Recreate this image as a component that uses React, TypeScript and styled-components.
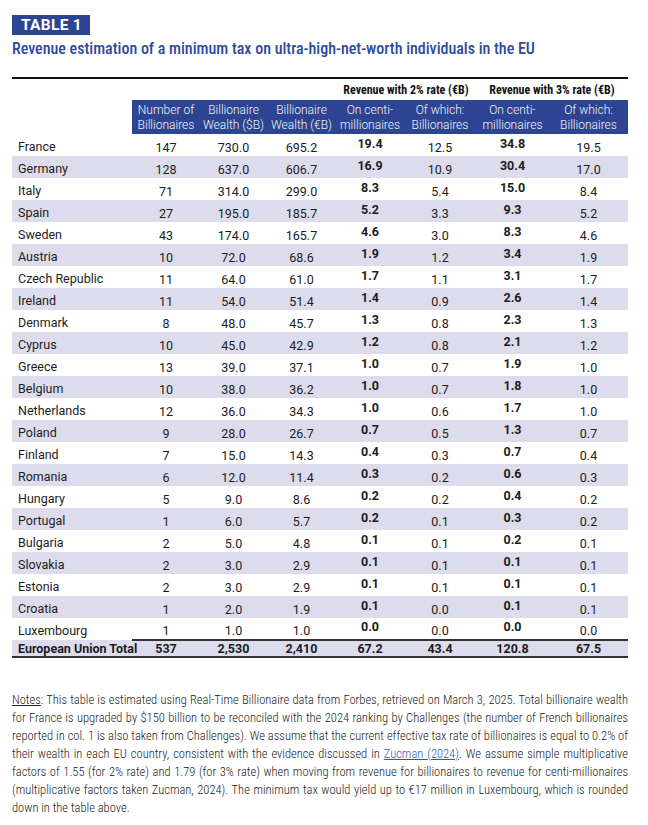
import styled, { createGlobalStyle } from "styled-components";

const GlobalStyle = createGlobalStyle`
    body {
        margin: 0;
        background: #ffffff;
        font-family: Roboto, "Noto Sans", sans-serif;
        color: #1c1c1c;
    }
`;

const Page = styled.div`
    width: 648px;
    padding: 15px 20px 0 12px;
    box-sizing: border-box;
`;

const Badge = styled.div`
    display: inline-block;
    background: #2d4492;
    color: #fff;
    font-weight: 700;
    font-size: 15.5px;
    font-stretch: 88%;
    line-height: 20px;
    height: 20px;
    padding: 0 8px 0 9px;
    letter-spacing: 0.3px;
`;

const Title = styled.h1`
    margin: 4px 0 0;
    color: #2d4a9c;
    font-size: 16px;
    font-weight: 500;
    font-stretch: 85%;
    line-height: 20px;
`;

const Table = styled.table`
    margin-top: 18px;
    width: 616px;
    border-collapse: collapse;
    table-layout: fixed;
    border-top: 2px solid #111;
    font-size: 12.5px;
`;

const GroupHead = styled.th`
    font-weight: 700;
    font-size: 12px;
    font-stretch: 84%;
    color: #111;
    height: 21px;
    padding: 0;
    vertical-align: middle;
    text-align: center;
    white-space: nowrap;
`;

const BandHead = styled.th`
    background: #2d4492;
    color: #f2f3fa;
    font-weight: 300;
    font-size: 12px;
    line-height: 15px;
    height: 33px;
    padding: 1px 0 0;
    text-align: center;
    white-space: nowrap;
`;

const Row = styled.tr<{ $shade: boolean }>`
    height: 22px;
    background: ${(p) => (p.$shade ? "#dcdcec" : "transparent")};
`;

const Country = styled.td`
    padding: 3px 0 0 6px;
    text-align: left;
    white-space: nowrap;
`;

const Num = styled.td<{ $bold?: boolean }>`
    text-align: center;
    padding: ${(p) => (p.$bold ? "0 0 4px" : "4px 0 0")};
    font-weight: ${(p) => (p.$bold ? 700 : 400)};
`;

const TotalRow = styled.tr`
    height: 17px;
    background: #dcdcec;
    font-weight: 700;
    border-bottom: 2px solid #333;
`;

const TotalLabel = styled.td`
    padding: 0 0 0 6px;
    white-space: nowrap;
`;

const TotalNum = styled.td`
    text-align: center;
    padding: 0;
    border-top: 2px solid #333;
`;

const Notes = styled.p`
    margin: 33px 0 0;
    width: 616px;
    font-size: 12.5px;
    font-weight: 300;
    font-stretch: 78%;
    line-height: 18px;
    color: #222;
    text-align: justify;
`;

const U = styled.span`
    text-decoration: underline;
`;

const Link = styled.span`
    color: #2d5aa8;
    text-decoration: underline;
`;

type R = [string, string, string, string, string, string, string, string];

const rows: R[] = [
    ["France", "147", "730.0", "695.2", "19.4", "12.5", "34.8", "19.5"],
    ["Germany", "128", "637.0", "606.7", "16.9", "10.9", "30.4", "17.0"],
    ["Italy", "71", "314.0", "299.0", "8.3", "5.4", "15.0", "8.4"],
    ["Spain", "27", "195.0", "185.7", "5.2", "3.3", "9.3", "5.2"],
    ["Sweden", "43", "174.0", "165.7", "4.6", "3.0", "8.3", "4.6"],
    ["Austria", "10", "72.0", "68.6", "1.9", "1.2", "3.4", "1.9"],
    ["Czech Republic", "11", "64.0", "61.0", "1.7", "1.1", "3.1", "1.7"],
    ["Ireland", "11", "54.0", "51.4", "1.4", "0.9", "2.6", "1.4"],
    ["Denmark", "8", "48.0", "45.7", "1.3", "0.8", "2.3", "1.3"],
    ["Cyprus", "10", "45.0", "42.9", "1.2", "0.8", "2.1", "1.2"],
    ["Greece", "13", "39.0", "37.1", "1.0", "0.7", "1.9", "1.0"],
    ["Belgium", "10", "38.0", "36.2", "1.0", "0.7", "1.8", "1.0"],
    ["Netherlands", "12", "36.0", "34.3", "1.0", "0.6", "1.7", "1.0"],
    ["Poland", "9", "28.0", "26.7", "0.7", "0.5", "1.3", "0.7"],
    ["Finland", "7", "15.0", "14.3", "0.4", "0.3", "0.7", "0.4"],
    ["Romania", "6", "12.0", "11.4", "0.3", "0.2", "0.6", "0.3"],
    ["Hungary", "5", "9.0", "8.6", "0.2", "0.2", "0.4", "0.2"],
    ["Portugal", "1", "6.0", "5.7", "0.2", "0.1", "0.3", "0.2"],
    ["Bulgaria", "2", "5.0", "4.8", "0.1", "0.1", "0.2", "0.1"],
    ["Slovakia", "2", "3.0", "2.9", "0.1", "0.1", "0.1", "0.1"],
    ["Estonia", "2", "3.0", "2.9", "0.1", "0.1", "0.1", "0.1"],
    ["Croatia", "1", "2.0", "1.9", "0.1", "0.0", "0.1", "0.1"],
    ["Luxembourg", "1", "1.0", "1.0", "0.0", "0.0", "0.0", "0.0"],
];

const widths = [120, 68, 67, 69, 68, 72, 73, 79];

export default function App() {
    return (
        <Page>
            <GlobalStyle />
            <Badge>TABLE 1</Badge>
            <Title>Revenue estimation of a minimum tax on ultra-high-net-worth individuals in the EU</Title>
            <Table>
                <colgroup>
                    {widths.map((w, i) => (
                        <col key={i} style={{ width: w }} />
                    ))}
                </colgroup>
                <thead>
                    <tr>
                        <th colSpan={4} />
                        <GroupHead colSpan={2}>Revenue with 2% rate (€B)</GroupHead>
                        <GroupHead colSpan={2}>Revenue with 3% rate (€B)</GroupHead>
                    </tr>
                    <tr>
                        <th />
                        <BandHead>Number of<br />Billionaires</BandHead>
                        <BandHead>Billionaire<br />Wealth ($B)</BandHead>
                        <BandHead>Billionaire<br />Wealth (€B)</BandHead>
                        <BandHead>On centi-<br />millionaires</BandHead>
                        <BandHead>Of which:<br />Billionaires</BandHead>
                        <BandHead>On centi-<br />millionaires</BandHead>
                        <BandHead>Of which:<br />Billionaires</BandHead>
                    </tr>
                </thead>
                <tbody>
                    {rows.map((r, i) => (
                        <Row key={r[0]} $shade={i % 2 === 1}>
                            <Country>{r[0]}</Country>
                            <Num>{r[1]}</Num>
                            <Num>{r[2]}</Num>
                            <Num>{r[3]}</Num>
                            <Num $bold>{r[4]}</Num>
                            <Num>{r[5]}</Num>
                            <Num $bold>{r[6]}</Num>
                            <Num>{r[7]}</Num>
                        </Row>
                    ))}
                    <TotalRow>
                        <TotalLabel>European Union Total</TotalLabel>
                        <TotalNum>537</TotalNum>
                        <TotalNum>2,530</TotalNum>
                        <TotalNum>2,410</TotalNum>
                        <TotalNum>67.2</TotalNum>
                        <TotalNum>43.4</TotalNum>
                        <TotalNum>120.8</TotalNum>
                        <TotalNum>67.5</TotalNum>
                    </TotalRow>
                </tbody>
            </Table>
            <Notes>
                <U>Notes</U>: This table is estimated using Real-Time Billionaire data from Forbes, retrieved on March 3, 2025. Total billionaire wealth
                for France is upgraded by $150 billion to be reconciled with the 2024 ranking by Challenges (the number of French billionaires
                reported in col. 1 is also taken from Challenges). We assume that the current effective tax rate of billionaires is equal to 0.2% of
                their wealth in each EU country, consistent with the evidence discussed in <Link>Zucman (2024)</Link>. We assume simple multiplicative
                factors of 1.55 (for 2% rate) and 1.79 (for 3% rate) when moving from revenue for billionaires to revenue for centi-millionaires
                (multiplicative factors taken Zucman, 2024). The minimum tax would yield up to €17 million in Luxembourg, which is rounded
                down in the table above.
            </Notes>
        </Page>
    );
}
